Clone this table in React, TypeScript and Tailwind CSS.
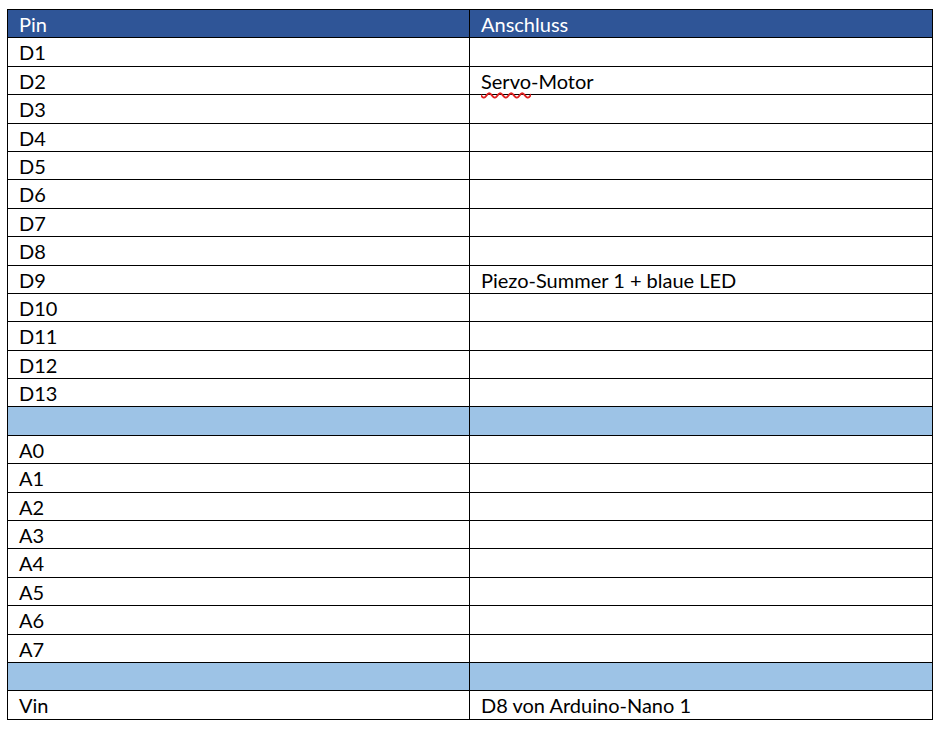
// Pinbelegung – Tabelle im Word-Stil

const rows: { pin: string; conn: React.ReactNode; spacer?: boolean }[] = [
  { pin: "D1", conn: "" },
  {
    pin: "D2",
    conn: (
      <>
        <span className="underline decoration-wavy decoration-[#e02020] decoration-[1.5px] underline-offset-[3px]">
          Servo
        </span>
        -Motor
      </>
    ),
  },
  { pin: "D3", conn: "" },
  { pin: "D4", conn: "" },
  { pin: "D5", conn: "" },
  { pin: "D6", conn: "" },
  { pin: "D7", conn: "" },
  { pin: "D8", conn: "" },
  { pin: "D9", conn: "Piezo-Summer 1 + blaue LED" },
  { pin: "D10", conn: "" },
  { pin: "D11", conn: "" },
  { pin: "D12", conn: "" },
  { pin: "D13", conn: "" },
  { pin: "", conn: "", spacer: true },
  { pin: "A0", conn: "" },
  { pin: "A1", conn: "" },
  { pin: "A2", conn: "" },
  { pin: "A3", conn: "" },
  { pin: "A4", conn: "" },
  { pin: "A5", conn: "" },
  { pin: "A6", conn: "" },
  { pin: "A7", conn: "" },
  { pin: "", conn: "", spacer: true },
  { pin: "Vin", conn: "D8 von Arduino-Nano 1" },
];

export default function App() {
  return (
    <div className="w-[943px] h-[730px] bg-white pl-[7px] pt-[9px] font-['Lato','Noto_Sans',sans-serif] text-[20px] text-black">
      <table className="w-[926px] border-collapse table-fixed">
        <colgroup>
          <col className="w-[462px]" />
          <col />
        </colgroup>
        <thead>
          <tr className="h-[28.4px] bg-[#2f5597] text-white">
            <th className="border border-black px-[11px] pt-[1px] text-left font-normal align-top leading-[26px]">Pin</th>
            <th className="border border-black px-[11px] pt-[1px] text-left font-normal align-top leading-[26px]">Anschluss</th>
          </tr>
        </thead>
        <tbody>
          {rows.map((r, i) => (
            <tr key={i} className={`h-[28.4px] ${r.spacer ? "bg-[#9dc3e6]" : ""}`}>
              <td className="border border-black px-[11px] pt-[1px] align-top leading-[26px]">{r.pin}</td>
              <td className="border border-black px-[11px] pt-[1px] align-top leading-[26px]">{r.conn}</td>
            </tr>
          ))}
        </tbody>
      </table>
    </div>
  );
}
